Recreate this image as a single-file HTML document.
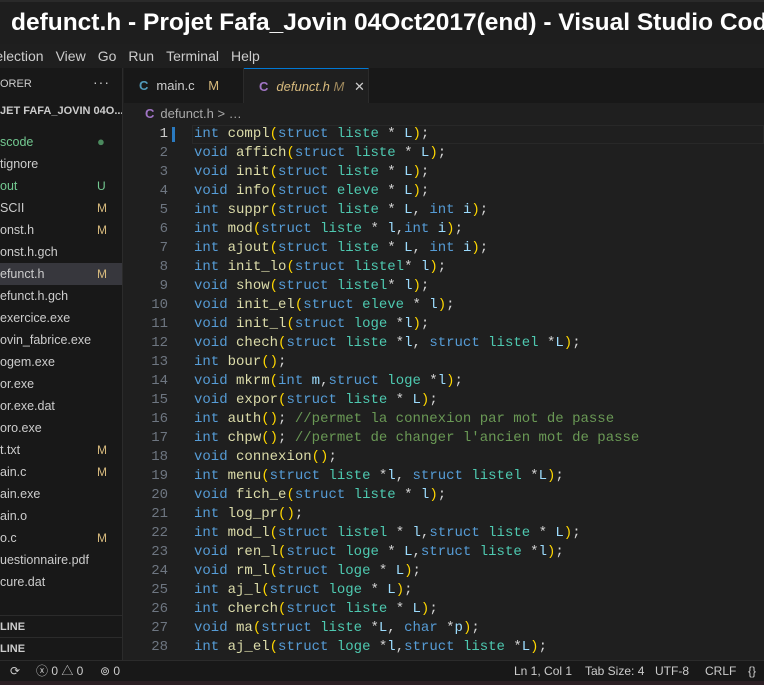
<!DOCTYPE html>
<html><head><meta charset="utf-8"><style>
*{margin:0;padding:0;box-sizing:border-box}
body{width:764px;height:685px;overflow:hidden;background:#1f1f1f;font-family:"Liberation Sans",sans-serif;color:#ccc;position:relative}
.title{position:absolute;left:0;top:0;width:764px;height:44px;background:#1e1e1e;border-top:2px solid #2a2a2a;color:#fff;font-weight:bold;font-size:24.5px;padding-left:11px;line-height:42px;white-space:nowrap;overflow:hidden}
.menu{position:absolute;top:44px;width:800px;height:24px;background:#1f1f1f;font-size:14px;color:#ccc;line-height:24px;white-space:nowrap;left:-14px}
.menu span{margin-right:12px}
.side{position:absolute;left:0;top:68px;width:123px;height:592px;background:#181818;border-right:1px solid #2b2b2b;font-size:12.5px;overflow:hidden}
.side .h{position:absolute;left:0;top:10px;font-size:11px;color:#ccc}
.side .dots{position:absolute;left:93px;top:6px;font-size:14px;letter-spacing:1px}
.side .p{position:absolute;left:0;top:37px;font-size:11px;font-weight:bold;color:#ccc;white-space:nowrap}
.item{position:absolute;left:0;width:123px;height:22px;line-height:22px;color:#ccc;white-space:nowrap}
.item b{position:absolute;left:97px;font-weight:normal;color:#d7ba7d;font-size:12px}
.sel{background:#37373d}
.ol{position:absolute;left:0;width:123px;height:22px;border-top:1px solid #2b2b2b;font-size:11px;font-weight:bold;line-height:22px}
.tabs{position:absolute;left:124px;top:68px;width:640px;height:35px;background:#181818}
.tab{position:absolute;top:0;height:35px;line-height:35px;font-size:13px}
.tab .c{font-weight:bold;margin-right:8px}
.crumb{position:absolute;left:145px;top:106px;font-size:13px;color:#a9a9a9}
.code{position:absolute;left:124px;top:125px;font-family:"Liberation Mono",monospace;font-size:14px;line-height:19px;white-space:pre}
.ln{position:absolute;left:0;width:44px;text-align:right;color:#6e7681}
.tx{position:absolute;left:70px;color:#d4d4d4}
.k{color:#569cd6}.f{color:#dcdcaa}.t{color:#4ec9b0}.v{color:#9cdcfe}.p{color:#ffd700}.cm{color:#6a9955}
.status{position:absolute;left:0;top:660px;width:764px;height:21px;background:#181818;border-top:1px solid #2b2b2b;font-size:12px;color:#ccc;line-height:20px;white-space:nowrap}
.bot{position:absolute;left:0;top:681px;width:764px;height:4px;background:#2b1f24}
</style></head><body>
<div class="title">defunct.h - Projet Fafa_Jovin 04Oct2017(end) - Visual Studio Code</div>
<div class="menu"><span>Selection</span><span>View</span><span>Go</span><span>Run</span><span>Terminal</span><span>Help</span></div>
<div class="side">
<div class="h">ORER</div><div class="dots">···</div>
<div class="p">JET FAFA_JOVIN 04O...</div>
<div class="item" style="top:63px;color:#73c991">scode<b style="color:#4b8a5e;left:97px;font-size:13px">●</b></div>
<div class="item" style="top:85px">tignore</div>
<div class="item" style="top:107px;color:#73c991">out<b style="color:#73c991">U</b></div>
<div class="item" style="top:129px">SCII<b>M</b></div>
<div class="item" style="top:151px">onst.h<b>M</b></div>
<div class="item" style="top:173px">onst.h.gch</div>
<div class="item sel" style="top:195px">efunct.h<b>M</b></div>
<div class="item" style="top:217px">efunct.h.gch</div>
<div class="item" style="top:239px">exercice.exe</div>
<div class="item" style="top:261px">ovin_fabrice.exe</div>
<div class="item" style="top:283px">ogem.exe</div>
<div class="item" style="top:305px">or.exe</div>
<div class="item" style="top:327px">or.exe.dat</div>
<div class="item" style="top:349px">oro.exe</div>
<div class="item" style="top:371px">t.txt<b>M</b></div>
<div class="item" style="top:393px">ain.c<b>M</b></div>
<div class="item" style="top:415px">ain.exe</div>
<div class="item" style="top:437px">ain.o</div>
<div class="item" style="top:459px">o.c<b>M</b></div>
<div class="item" style="top:481px">uestionnaire.pdf</div>
<div class="item" style="top:503px">cure.dat</div>
<div class="ol" style="top:547px">LINE</div>
<div class="ol" style="top:569px">LINE</div>
</div>
<div class="tabs">
<div class="tab" style="left:0;width:120px;padding-left:15px;border-right:1px solid #2b2b2b"><span class="c" style="color:#519aba">C</span>main.c <span style="color:#d7ba7d;margin-left:10px">M</span></div>
<div class="tab" style="left:120px;width:125px;padding-left:15px;background:#1f1f1f;border-top:1px solid #0078d4;border-right:1px solid #2b2b2b"><span class="c" style="color:#a074c4">C</span><i style="color:#d7ba7d">defunct.h</i> <i style="color:#a08a5e">M</i> <span style="margin-left:6px;color:#ccc">✕</span></div>
</div>
<div class="crumb"><span style="color:#a074c4;font-weight:bold;margin-right:6px">C</span>defunct.h &gt; …</div>
<div style="position:absolute;left:192px;top:125px;width:572px;height:19px;border:1px solid #282828"></div>
<div style="position:absolute;left:172px;top:127px;width:3px;height:15px;background:#2a7ac0"></div>
<div class="code">
<div class="ln" style="top:0;color:#ccc">1</div><div class="tx" style="top:0"><span class="k">int</span> <span class="f">compl</span><span class="p">(</span><span class="k">struct</span> <span class="t">liste</span> * <span class="v">L</span><span class="p">)</span>;</div>
<div class="ln" style="top:19px">2</div><div class="tx" style="top:19px"><span class="k">void</span> <span class="f">affich</span><span class="p">(</span><span class="k">struct</span> <span class="t">liste</span> * <span class="v">L</span><span class="p">)</span>;</div>
<div class="ln" style="top:38px">3</div><div class="tx" style="top:38px"><span class="k">void</span> <span class="f">init</span><span class="p">(</span><span class="k">struct</span> <span class="t">liste</span> * <span class="v">L</span><span class="p">)</span>;</div>
<div class="ln" style="top:57px">4</div><div class="tx" style="top:57px"><span class="k">void</span> <span class="f">info</span><span class="p">(</span><span class="k">struct</span> <span class="t">eleve</span> * <span class="v">L</span><span class="p">)</span>;</div>
<div class="ln" style="top:76px">5</div><div class="tx" style="top:76px"><span class="k">int</span> <span class="f">suppr</span><span class="p">(</span><span class="k">struct</span> <span class="t">liste</span> * <span class="v">L</span>, <span class="k">int</span> <span class="v">i</span><span class="p">)</span>;</div>
<div class="ln" style="top:95px">6</div><div class="tx" style="top:95px"><span class="k">int</span> <span class="f">mod</span><span class="p">(</span><span class="k">struct</span> <span class="t">liste</span> * <span class="v">l</span>,<span class="k">int</span> <span class="v">i</span><span class="p">)</span>;</div>
<div class="ln" style="top:114px">7</div><div class="tx" style="top:114px"><span class="k">int</span> <span class="f">ajout</span><span class="p">(</span><span class="k">struct</span> <span class="t">liste</span> * <span class="v">L</span>, <span class="k">int</span> <span class="v">i</span><span class="p">)</span>;</div>
<div class="ln" style="top:133px">8</div><div class="tx" style="top:133px"><span class="k">int</span> <span class="f">init_lo</span><span class="p">(</span><span class="k">struct</span> <span class="t">listel</span>* <span class="v">l</span><span class="p">)</span>;</div>
<div class="ln" style="top:152px">9</div><div class="tx" style="top:152px"><span class="k">void</span> <span class="f">show</span><span class="p">(</span><span class="k">struct</span> <span class="t">listel</span>* <span class="v">l</span><span class="p">)</span>;</div>
<div class="ln" style="top:171px">10</div><div class="tx" style="top:171px"><span class="k">void</span> <span class="f">init_el</span><span class="p">(</span><span class="k">struct</span> <span class="t">eleve</span> * <span class="v">l</span><span class="p">)</span>;</div>
<div class="ln" style="top:190px">11</div><div class="tx" style="top:190px"><span class="k">void</span> <span class="f">init_l</span><span class="p">(</span><span class="k">struct</span> <span class="t">loge</span> *<span class="v">l</span><span class="p">)</span>;</div>
<div class="ln" style="top:209px">12</div><div class="tx" style="top:209px"><span class="k">void</span> <span class="f">chech</span><span class="p">(</span><span class="k">struct</span> <span class="t">liste</span> *<span class="v">l</span>, <span class="k">struct</span> <span class="t">listel</span> *<span class="v">L</span><span class="p">)</span>;</div>
<div class="ln" style="top:228px">13</div><div class="tx" style="top:228px"><span class="k">int</span> <span class="f">bour</span><span class="p">()</span>;</div>
<div class="ln" style="top:247px">14</div><div class="tx" style="top:247px"><span class="k">void</span> <span class="f">mkrm</span><span class="p">(</span><span class="k">int</span> <span class="v">m</span>,<span class="k">struct</span> <span class="t">loge</span> *<span class="v">l</span><span class="p">)</span>;</div>
<div class="ln" style="top:266px">15</div><div class="tx" style="top:266px"><span class="k">void</span> <span class="f">expor</span><span class="p">(</span><span class="k">struct</span> <span class="t">liste</span> * <span class="v">L</span><span class="p">)</span>;</div>
<div class="ln" style="top:285px">16</div><div class="tx" style="top:285px"><span class="k">int</span> <span class="f">auth</span><span class="p">()</span>; <span class="cm">//permet la connexion par mot de passe</span></div>
<div class="ln" style="top:304px">17</div><div class="tx" style="top:304px"><span class="k">int</span> <span class="f">chpw</span><span class="p">()</span>; <span class="cm">//permet de changer l'ancien mot de passe</span></div>
<div class="ln" style="top:323px">18</div><div class="tx" style="top:323px"><span class="k">void</span> <span class="f">connexion</span><span class="p">()</span>;</div>
<div class="ln" style="top:342px">19</div><div class="tx" style="top:342px"><span class="k">int</span> <span class="f">menu</span><span class="p">(</span><span class="k">struct</span> <span class="t">liste</span> *<span class="v">l</span>, <span class="k">struct</span> <span class="t">listel</span> *<span class="v">L</span><span class="p">)</span>;</div>
<div class="ln" style="top:361px">20</div><div class="tx" style="top:361px"><span class="k">void</span> <span class="f">fich_e</span><span class="p">(</span><span class="k">struct</span> <span class="t">liste</span> * <span class="v">l</span><span class="p">)</span>;</div>
<div class="ln" style="top:380px">21</div><div class="tx" style="top:380px"><span class="k">int</span> <span class="f">log_pr</span><span class="p">()</span>;</div>
<div class="ln" style="top:399px">22</div><div class="tx" style="top:399px"><span class="k">int</span> <span class="f">mod_l</span><span class="p">(</span><span class="k">struct</span> <span class="t">listel</span> * <span class="v">l</span>,<span class="k">struct</span> <span class="t">liste</span> * <span class="v">L</span><span class="p">)</span>;</div>
<div class="ln" style="top:418px">23</div><div class="tx" style="top:418px"><span class="k">void</span> <span class="f">ren_l</span><span class="p">(</span><span class="k">struct</span> <span class="t">loge</span> * <span class="v">L</span>,<span class="k">struct</span> <span class="t">liste</span> *<span class="v">l</span><span class="p">)</span>;</div>
<div class="ln" style="top:437px">24</div><div class="tx" style="top:437px"><span class="k">void</span> <span class="f">rm_l</span><span class="p">(</span><span class="k">struct</span> <span class="t">loge</span> * <span class="v">L</span><span class="p">)</span>;</div>
<div class="ln" style="top:456px">25</div><div class="tx" style="top:456px"><span class="k">int</span> <span class="f">aj_l</span><span class="p">(</span><span class="k">struct</span> <span class="t">loge</span> * <span class="v">L</span><span class="p">)</span>;</div>
<div class="ln" style="top:475px">26</div><div class="tx" style="top:475px"><span class="k">int</span> <span class="f">cherch</span><span class="p">(</span><span class="k">struct</span> <span class="t">liste</span> * <span class="v">L</span><span class="p">)</span>;</div>
<div class="ln" style="top:494px">27</div><div class="tx" style="top:494px"><span class="k">void</span> <span class="f">ma</span><span class="p">(</span><span class="k">struct</span> <span class="t">liste</span> *<span class="v">L</span>, <span class="k">char</span> *<span class="v">p</span><span class="p">)</span>;</div>
<div class="ln" style="top:513px">28</div><div class="tx" style="top:513px"><span class="k">int</span> <span class="f">aj_el</span><span class="p">(</span><span class="k">struct</span> <span class="t">loge</span> *<span class="v">l</span>,<span class="k">struct</span> <span class="t">liste</span> *<span class="v">L</span><span class="p">)</span>;</div>
</div>
<div class="status">
<span style="position:absolute;left:10px">⟳</span>
<span style="position:absolute;left:36px">ⓧ 0 △ 0</span>
<span style="position:absolute;left:100px">⊚ 0</span>
<span style="position:absolute;left:514px">Ln 1, Col 1</span>
<span style="position:absolute;left:585px">Tab Size: 4</span>
<span style="position:absolute;left:655px">UTF-8</span>
<span style="position:absolute;left:705px">CRLF</span>
<span style="position:absolute;left:748px">{}</span>
</div>
<div class="bot"></div>
</body></html>
